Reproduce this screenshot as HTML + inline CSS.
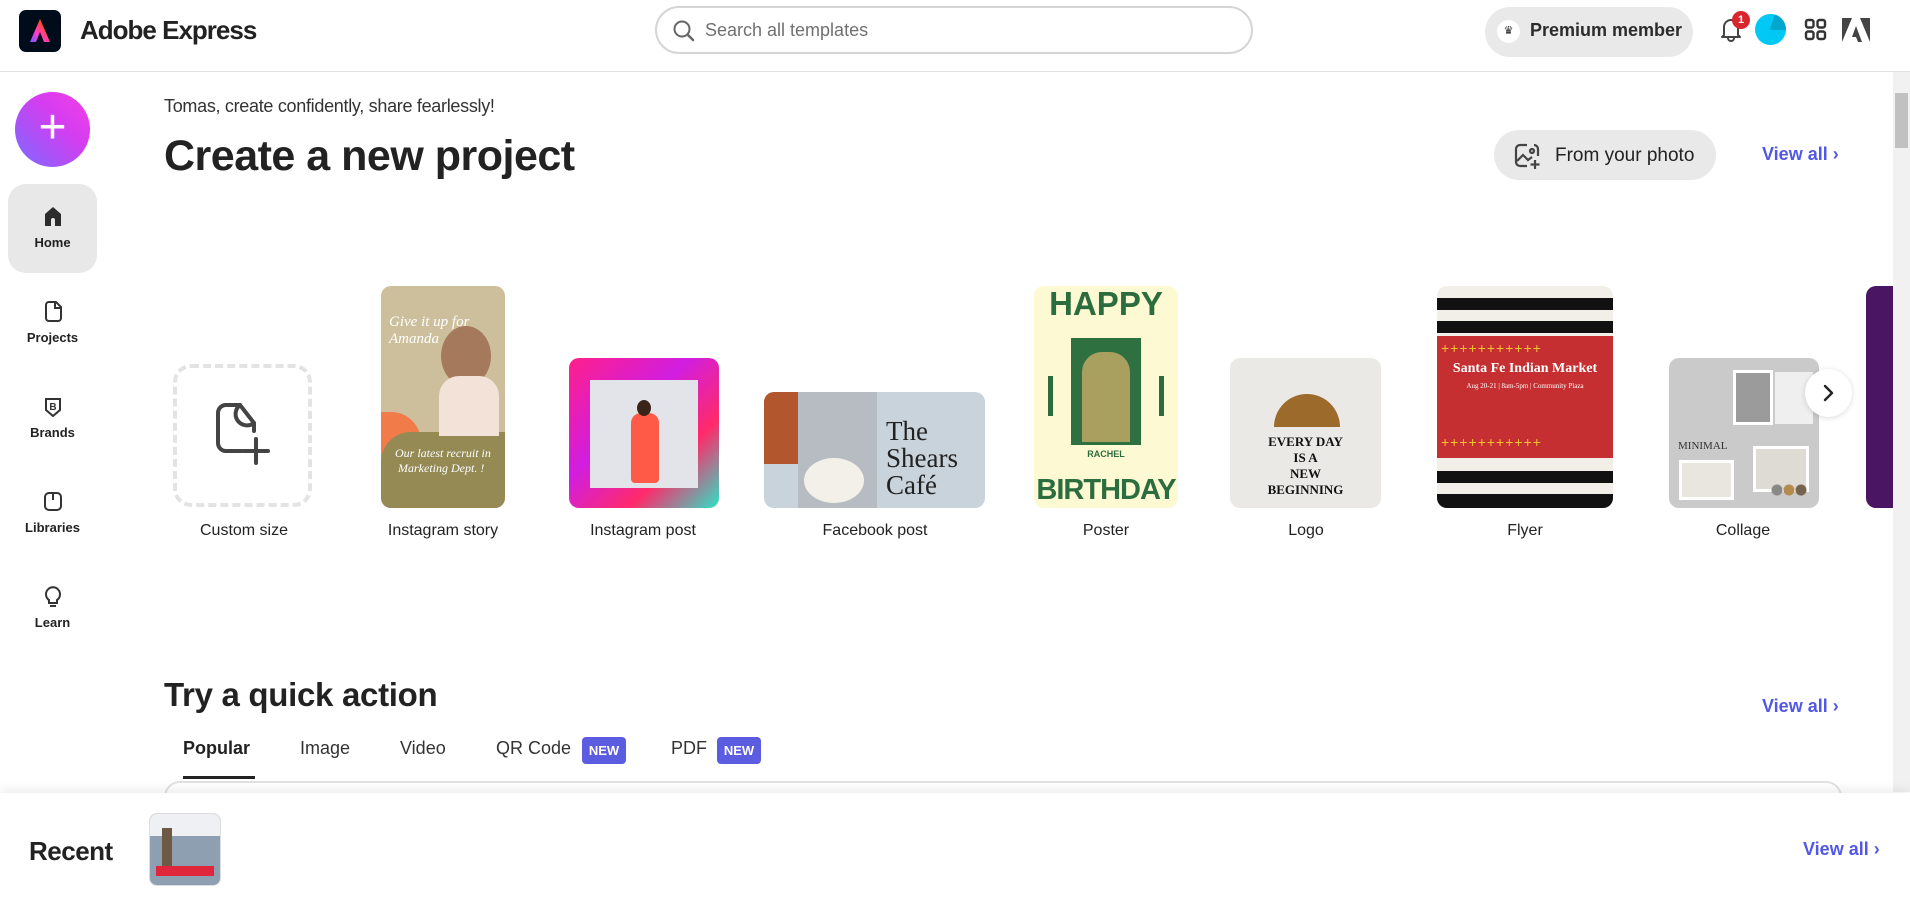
<!DOCTYPE html>
<html><head><meta charset="utf-8"><style>
*{box-sizing:border-box;margin:0;padding:0}
body{width:1910px;height:902px;overflow:hidden;background:#fff;font-family:"Liberation Sans",sans-serif;color:#222;position:relative}
.a{position:absolute}
.hdr{left:0;top:0;width:1910px;height:72px;border-bottom:1px solid #e1e1e1;background:#fff}
.lbl{position:absolute;font-size:16px;color:#222;transform:translateX(-50%);white-space:nowrap;top:522px}
.nav{position:absolute;left:8px;width:89px;text-align:center;font-size:13px;font-weight:bold;color:#222}
.card{position:absolute;border-radius:10px;overflow:hidden}
.va{position:absolute;color:#5258e4;font-size:18px;font-weight:bold}
.tab{position:absolute;top:738px;font-size:18px;color:#333}
.new{position:absolute;top:737px;height:27px;width:44px;background:#5c5ce0;color:#fff;font-size:13px;font-weight:bold;border-radius:4px;text-align:center;line-height:27px}
</style></head><body>
<div class="a hdr"></div>
<div class="a" style="left:19px;top:10px;width:42px;height:42px;border-radius:7px;background:#000c1a">
<svg width="42" height="42" viewBox="0 0 42 42"><defs><linearGradient id="g" x1="0" y1="1" x2="1" y2="0"><stop offset="0" stop-color="#6e5cff"/><stop offset=".35" stop-color="#ff3bd2"/><stop offset=".7" stop-color="#ff4b2b"/><stop offset="1" stop-color="#ffb400"/></linearGradient></defs><path d="M21 9 L31 32 L25 32 L21 22 L17 32 L11 32 Z" fill="url(#g)"/></svg></div>
<div class="a" style="left:80px;top:15px;font-size:26px;font-weight:bold;letter-spacing:-1px">Adobe Express</div>
<div class="a" style="left:655px;top:6px;width:598px;height:48px;border:2px solid #d5d5d5;border-radius:24px"></div>
<svg class="a" style="left:672px;top:19px" width="24" height="24" viewBox="0 0 24 24"><circle cx="10" cy="10" r="7.5" fill="none" stroke="#666" stroke-width="2"/><path d="M15.5 15.5 L21 21" stroke="#666" stroke-width="2.4" stroke-linecap="round"/></svg>
<div class="a" style="left:705px;top:20px;font-size:18px;color:#707070">Search all templates</div>
<div class="a" style="left:1485px;top:7px;width:208px;height:50px;background:#e9e9e9;border-radius:25px"></div>
<div class="a" style="left:1497px;top:20px;width:23px;height:23px;border-radius:50%;background:#fff;font-size:11px;text-align:center;line-height:23px">♛</div>
<div class="a" style="left:1530px;top:20px;font-size:18px;font-weight:bold;color:#2c2c2c">Premium member</div>
<svg class="a" style="left:1719px;top:16px" width="24" height="26" viewBox="0 0 24 26"><path d="M5 19 V11 a7 7 0 0 1 14 0 V19 L21 21 H3 Z" fill="none" stroke="#444" stroke-width="2" stroke-linejoin="round"/><path d="M9 22 a3 3 0 0 0 6 0" fill="none" stroke="#444" stroke-width="2"/></svg>
<div class="a" style="left:1732px;top:11px;width:18px;height:18px;border-radius:50%;background:#d7262e;color:#fff;font-size:11px;font-weight:bold;text-align:center;line-height:18px">1</div>
<div class="a" style="left:1755px;top:14px;width:31px;height:31px;border-radius:50%;background:#00c8f5;overflow:hidden"><div style="position:absolute;left:15px;top:0;width:16px;height:16px;background:#00a6cc;clip-path:polygon(30% 0,100% 0,100% 100%,0 100%)"></div></div>
<svg class="a" style="left:1804px;top:18px" width="23" height="23" viewBox="0 0 23 23" fill="none" stroke="#333" stroke-width="2.4"><rect x="2" y="2" width="7.5" height="7.5" rx="2"/><rect x="13.5" y="2" width="7.5" height="7.5" rx="2"/><rect x="2" y="13.5" width="7.5" height="7.5" rx="2"/><rect x="13.5" y="13.5" width="7.5" height="7.5" rx="2"/></svg>
<svg class="a" style="left:1842px;top:18px" width="28" height="24" viewBox="0 0 28 24"><path d="M0 0 H10 L0 24 Z M18 0 H28 V24 Z M14 8 L20 24 H16 L14 19 H10 Z" fill="#444"/></svg>
<!-- sidebar -->
<div class="a" style="left:15px;top:92px;width:75px;height:75px;border-radius:50%;background:linear-gradient(225deg,#f53ee7 0%,#d43df0 40%,#7b6bff 100%)"></div>
<div class="a" style="left:15px;top:92px;width:75px;height:75px;color:#fff;font-size:48px;text-align:center;line-height:72px;font-weight:300">+</div>
<div class="a" style="left:8px;top:184px;width:89px;height:89px;border-radius:18px;background:#e8e8e8"></div>
<svg class="a" style="left:43px;top:206px" width="20" height="21" viewBox="0 0 20 21"><path d="M2 8 L10 1 L18 8 V20 H12 V14 a2 2 0 0 0 -4 0 V20 H2 Z" fill="#2c2c2c"/></svg>
<div class="nav" style="top:235px">Home</div>
<svg class="a" style="left:43px;top:301px" width="20" height="21" viewBox="0 0 20 21" fill="none" stroke="#333" stroke-width="2"><path d="M3 4 a3 3 0 0 1 3 -3 H13 L18 6 V17 a3 3 0 0 1 -3 3 H6 a3 3 0 0 1 -3 -3 Z"/><path d="M12 1 V7 H18"/></svg>
<div class="nav" style="top:330px">Projects</div>
<svg class="a" style="left:43px;top:396px" width="20" height="21" viewBox="0 0 20 21" fill="none" stroke="#333" stroke-width="2"><path d="M3 3 H17 V14 L10 20 L3 14 Z"/><text x="10" y="14" font-size="10" font-weight="bold" text-anchor="middle" fill="#333" stroke="none" font-family="Liberation Sans">B</text></svg>
<div class="nav" style="top:425px">Brands</div>
<svg class="a" style="left:43px;top:491px" width="20" height="21" viewBox="0 0 20 21" fill="none" stroke="#333" stroke-width="2"><rect x="2" y="2" width="16" height="17" rx="4"/><path d="M10 2 V9"/></svg>
<div class="nav" style="top:520px">Libraries</div>
<svg class="a" style="left:43px;top:586px" width="20" height="22" viewBox="0 0 20 22" fill="none" stroke="#333" stroke-width="2"><path d="M6 14 a7 7 0 1 1 8 0 V17 H6 Z"/><path d="M7 20 H13"/></svg>
<div class="nav" style="top:615px">Learn</div>
<!-- main -->
<div class="a" style="left:164px;top:96px;font-size:18px;color:#333;letter-spacing:-0.3px">Tomas, create confidently, share fearlessly!</div>
<div class="a" style="left:164px;top:132px;font-size:43px;font-weight:bold;letter-spacing:-0.5px;color:#222">Create a new project</div>
<div class="a" style="left:1494px;top:130px;width:222px;height:50px;background:#e9e9e9;border-radius:25px"></div>
<svg class="a" style="left:1513px;top:142px" width="28" height="28" viewBox="0 0 28 28" fill="none" stroke="#444" stroke-width="2.2"><path d="M14 3 H7 a4 4 0 0 0 -4 4 V20 a4 4 0 0 0 4 4 H14"/><path d="M25 14 V7 a4 4 0 0 0 -4 -4"/><path d="M4 19 L10 13 L15 18 L19 15"/><circle cx="19" cy="9" r="2"/><path d="M22 18 V27 M17.5 22.5 H26.5"/></svg>
<div class="a" style="left:1555px;top:145px;font-size:19px;color:#222">From your photo</div>
<div class="va" style="left:1762px;top:144px">View all ›</div>
<!-- cards -->
<div class="a" style="left:173px;top:364px;width:139px;height:143px;border:4px dashed #e3e3e3;border-radius:18px"></div>
<svg class="a" style="left:212px;top:401px" width="62" height="68" viewBox="0 0 62 68" fill="none" stroke="#444" stroke-width="4" stroke-linecap="round"><path d="M30 50 H14 a8 8 0 0 1 -8 -8 V12 a8 8 0 0 1 8 -8 H28 L42 22 V30"/><path d="M28 4 a10 10 0 0 0 14 18"/><path d="M44 38 V62 M32 50 H56"/></svg>
<div class="lbl" style="left:244px">Custom size</div>
<div class="card" style="left:381px;top:286px;width:124px;height:222px;background:#cdbf9b">
 <div class="a" style="left:0;top:126px;width:40px;height:60px;background:#f27b4a;border-radius:0 30px 30px 0"></div>
 <div class="a" style="left:0;top:146px;width:124px;height:76px;background:#958a54;border-radius:30px 0 0 0"></div>
 <div class="a" style="left:60px;top:40px;width:50px;height:60px;background:#a57a5c;border-radius:50%"></div>
 <div class="a" style="left:58px;top:90px;width:60px;height:60px;background:#f2e2d8;border-radius:20px 20px 0 0"></div>
 <div class="a" style="left:8px;top:28px;color:#fff;font-family:'Liberation Serif',serif;font-style:italic;font-size:15px;line-height:17px">Give it up for<br>Amanda</div>
 <div class="a" style="left:14px;top:160px;color:#fff;font-family:'Liberation Serif',serif;font-style:italic;font-size:12px;line-height:15px">Our latest recruit in<br>&nbsp;Marketing Dept. !</div>
</div>
<div class="lbl" style="left:443px">Instagram story</div>
<div class="card" style="left:569px;top:358px;width:150px;height:150px;background:linear-gradient(135deg,#ff1f8a 0%,#d11ee0 40%,#ff2a6a 70%,#2ee2c6 100%)">
 <div class="a" style="left:21px;top:22px;width:108px;height:108px;background:#e3e4ea"></div>
 <div class="a" style="left:62px;top:55px;width:28px;height:70px;background:#ff5a48;border-radius:10px 10px 4px 4px"></div>
 <div class="a" style="left:68px;top:42px;width:14px;height:16px;background:#3a2418;border-radius:50%"></div>
</div>
<div class="lbl" style="left:643px">Instagram post</div>
<div class="card" style="left:764px;top:392px;width:221px;height:116px;background:#c9d3dc">
 <div class="a" style="left:0;top:0;width:34px;height:72px;background:#b2562e"></div>
 <div class="a" style="left:34px;top:0;width:79px;height:116px;background:#b7bcc2"></div>
 <div class="a" style="left:40px;top:66px;width:60px;height:45px;background:#f3f0ea;border-radius:50%"></div>
 <div class="a" style="left:122px;top:26px;font-family:'Liberation Serif',serif;font-size:27px;line-height:27px;color:#222">The<br>Shears<br>Café</div>
</div>
<div class="lbl" style="left:875px">Facebook post</div>
<div class="card" style="left:1034px;top:286px;width:144px;height:222px;background:#fdf9d2">
 <div class="a" style="left:0;top:0;width:144px;text-align:center;font-size:33px;font-weight:bold;color:#2b6d3e;line-height:36px">HAPPY</div>
 <div class="a" style="left:37px;top:52px;width:70px;height:107px;background:#2e7040"></div>
 <div class="a" style="left:48px;top:66px;width:48px;height:90px;background:#a9a060;border-radius:20px 20px 0 0"></div>
 <div class="a" style="left:14px;top:90px;width:5px;height:40px;background:#2b6d3e"></div>
 <div class="a" style="left:125px;top:90px;width:5px;height:40px;background:#2b6d3e"></div>
 <div class="a" style="left:0;top:163px;width:144px;text-align:center;font-size:9px;font-weight:bold;color:#2b6d3e">RACHEL</div>
 <div class="a" style="left:0;top:186px;width:144px;text-align:center;font-size:29px;font-weight:bold;color:#2b6d3e;line-height:36px;letter-spacing:-1px">BIRTHDAY</div>
</div>
<div class="lbl" style="left:1106px">Poster</div>
<div class="card" style="left:1230px;top:358px;width:151px;height:150px;background:#ebe9e5">
 <div class="a" style="left:44px;top:36px;width:66px;height:33px;background:#9c6a2b;border-radius:33px 33px 0 0"></div>
 <div class="a" style="left:0;top:76px;width:151px;text-align:center;font-family:'Liberation Serif',serif;font-weight:bold;font-size:13px;line-height:16px;color:#111">EVERY DAY<br>IS A<br>NEW<br>BEGINNING</div>
</div>
<div class="lbl" style="left:1306px">Logo</div>
<div class="card" style="left:1437px;top:286px;width:176px;height:222px;background:#f2efe8">
 <div class="a" style="left:0;top:12px;width:176px;height:12px;background:#111"></div>
 <div class="a" style="left:0;top:35px;width:176px;height:12px;background:#111"></div>
 <div class="a" style="left:0;top:50px;width:176px;height:122px;background:#c62f31"></div>
 <div class="a" style="left:4px;top:54px;color:#f0c230;font-size:14px;letter-spacing:1px">+++++++++++</div>
 <div class="a" style="left:4px;top:148px;color:#f0c230;font-size:14px;letter-spacing:1px">+++++++++++</div>
 <div class="a" style="left:0;top:75px;width:176px;text-align:center;color:#fff;font-family:'Liberation Serif',serif;font-weight:bold;font-size:14px">Santa Fe Indian Market</div>
 <div class="a" style="left:0;top:96px;width:176px;text-align:center;color:#fff;font-family:'Liberation Serif',serif;font-size:7px">Aug 20-21 | 8am-5pm | Community Plaza</div>
 <div class="a" style="left:0;top:185px;width:176px;height:12px;background:#111"></div>
 <div class="a" style="left:0;top:208px;width:176px;height:14px;background:#111"></div>
</div>
<div class="lbl" style="left:1525px">Flyer</div>
<div class="card" style="left:1669px;top:358px;width:150px;height:150px;background:#cacaca">
 <div class="a" style="left:64px;top:12px;width:40px;height:55px;background:#9b9b9b;border:3px solid #fff"></div>
 <div class="a" style="left:106px;top:14px;width:38px;height:52px;background:#efefef"></div>
 <div class="a" style="left:9px;top:82px;font-family:'Liberation Serif',serif;font-size:11px;color:#333">MINIMAL</div>
 <div class="a" style="left:10px;top:102px;width:55px;height:40px;background:#e9e5df;border:3px solid #fff"></div>
 <div class="a" style="left:84px;top:88px;width:56px;height:46px;background:#dedad4;border:3px solid #fff"></div>
 <div class="a" style="left:102px;top:126px;width:36px;height:12px;background:radial-gradient(circle at 6px 6px,#888 5px,transparent 6px),radial-gradient(circle at 18px 6px,#b58a4f 5px,transparent 6px),radial-gradient(circle at 30px 6px,#76634e 5px,transparent 6px)"></div>
</div>
<div class="lbl" style="left:1743px">Collage</div>
<div class="card" style="left:1866px;top:286px;width:40px;height:222px;background:#4a1562;border-radius:10px 0 0 10px"></div>
<div class="a" style="left:1893px;top:72px;width:17px;height:720px;background:#f1f1f1"></div>
<div class="a" style="left:1895px;top:93px;width:13px;height:55px;background:#c1c1c1"></div>
<div class="a" style="left:1805px;top:369px;width:47px;height:48px;border-radius:50%;background:#fff;box-shadow:0 1px 6px rgba(0,0,0,.15)"></div>
<svg class="a" style="left:1820px;top:383px" width="16" height="20" viewBox="0 0 16 20"><path d="M5 3 L12 10 L5 17" fill="none" stroke="#222" stroke-width="2.4" stroke-linecap="round" stroke-linejoin="round"/></svg>
<!-- quick action -->
<div class="a" style="left:164px;top:676px;font-size:33px;font-weight:bold;letter-spacing:-0.3px;color:#222">Try a quick action</div>
<div class="va" style="left:1762px;top:696px">View all ›</div>
<div class="tab" style="left:183px;font-weight:bold;color:#222">Popular</div>
<div class="a" style="left:183px;top:776px;width:72px;height:3px;background:#222"></div>
<div class="tab" style="left:300px">Image</div>
<div class="tab" style="left:400px">Video</div>
<div class="tab" style="left:496px">QR Code</div>
<div class="new" style="left:582px">NEW</div>
<div class="tab" style="left:671px">PDF</div>
<div class="new" style="left:717px">NEW</div>
<div class="a" style="left:164px;top:781px;width:1678px;height:40px;border:2px solid #e2e2e2;border-radius:16px"></div>
<!-- recent bar -->
<div class="a" style="left:0;top:793px;width:1910px;height:109px;background:#fff;box-shadow:0 -4px 10px rgba(0,0,0,.07)"></div>
<div class="a" style="left:29px;top:836px;font-size:26px;font-weight:bold;letter-spacing:-0.5px;color:#222">Recent</div>
<div class="a" style="left:149px;top:813px;width:72px;height:73px;border-radius:8px;overflow:hidden;background:#8d9fb0;border:1px solid #ddd">
 <div class="a" style="left:0;top:0;width:72px;height:22px;background:#eef0f4"></div>
 <div class="a" style="left:12px;top:14px;width:10px;height:40px;background:#6e5a44"></div>
 <div class="a" style="left:6px;top:52px;width:58px;height:10px;background:#e0263a"></div>
</div>
<div class="va" style="left:1803px;top:839px">View all ›</div>
</body></html>
